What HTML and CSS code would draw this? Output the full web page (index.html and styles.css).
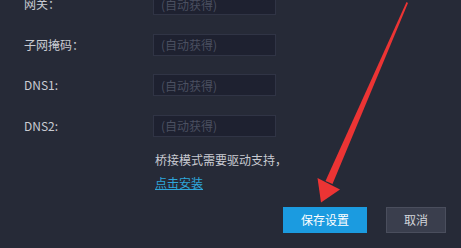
FILE: index.html
```html
<!DOCTYPE html>
<html lang="zh-CN">
<head>
    <meta charset="UTF-8">
    <title>网络设置</title>
    <link rel="stylesheet" href="styles.css">
</head>
<body>
    <div class="panel">
        <div class="form">
            <div class="row">
                <label class="label">网关：</label>
                <input class="field" type="text" placeholder="(自动获得)">
            </div>
            <div class="row">
                <label class="label">子网掩码：</label>
                <input class="field" type="text" placeholder="(自动获得)">
            </div>
            <div class="row">
                <label class="label">DNS1:</label>
                <input class="field" type="text" placeholder="(自动获得)">
            </div>
            <div class="row">
                <label class="label">DNS2:</label>
                <input class="field" type="text" placeholder="(自动获得)">
            </div>
        </div>

        <div class="note">
            <p>桥接模式需要驱动支持，</p>
            <a href="#" class="install-link">点击安装</a>
        </div>

        <div class="actions">
            <button class="btn btn-save">保存设置</button>
            <button class="btn btn-cancel">取消</button>
        </div>

        <!-- red pointer arrow drawn over the dialog -->
        <svg class="arrow" width="461" height="248" viewBox="0 0 461 248">
            <polygon points="406.5,9 408,10 332.5,191 325.5,188" fill="#ec3434"/>
            <polygon points="317.5,185 340,196.5 321,209.5" fill="#ec3434"/>
        </svg>
    </div>
</body>
</html>
```

FILE: styles.css
```css
html, body {
    margin: 0;
    padding: 0;
    height: 100%;
}

body {
    background-color: #262a37;
    font-family: "Noto Sans CJK SC", "Noto Sans", sans-serif;
    font-size: 12px;
    color: #c9cbd2;
    overflow: hidden;
}

.panel {
    position: relative;
    width: 461px;
    height: 248px;
}

.form {
    display: flex;
    flex-direction: column;
    gap: 18.5px;
    margin-top: -7px;
    padding-left: 24px;
}

.row {
    display: flex;
    align-items: center;
    height: 22px;
}

.label {
    width: 129px;
    line-height: 22px;
}

.field {
    box-sizing: border-box;
    width: 123px;
    height: 22px;
    padding: 0 7px;
    background-color: #1e2130;
    border: 1px solid #303445;
    color: #c9cbd2;
    font-family: inherit;
    font-size: 12px;
    outline: none;
}

.field::placeholder {
    color: #4b5061;
}

.note {
    padding-left: 155px;
    margin-top: 12px;
}

.note p {
    margin: 0;
    line-height: 22px;
}

.install-link {
    display: inline-block;
    margin-top: 1px;
    line-height: 22px;
    color: #2ea6da;
    text-decoration: underline;
}

.actions {
    display: flex;
    justify-content: flex-end;
    gap: 19px;
    padding-right: 15px;
    margin-top: 13px;
}

.btn {
    box-sizing: border-box;
    height: 26px;
    border: 1px solid transparent;
    font-family: inherit;
    font-size: 12px;
    color: #ffffff;
    cursor: pointer;
}

.btn-save {
    width: 84px;
    background-color: #1b9be0;
    border-color: #1b9be0;
}

.btn-cancel {
    width: 60px;
    background-color: #3a3e4d;
    border-color: #4a4e5d;
    color: #d4d6dc;
}

.arrow {
    position: absolute;
    top: 0;
    left: 0;
    pointer-events: none;
}
```
